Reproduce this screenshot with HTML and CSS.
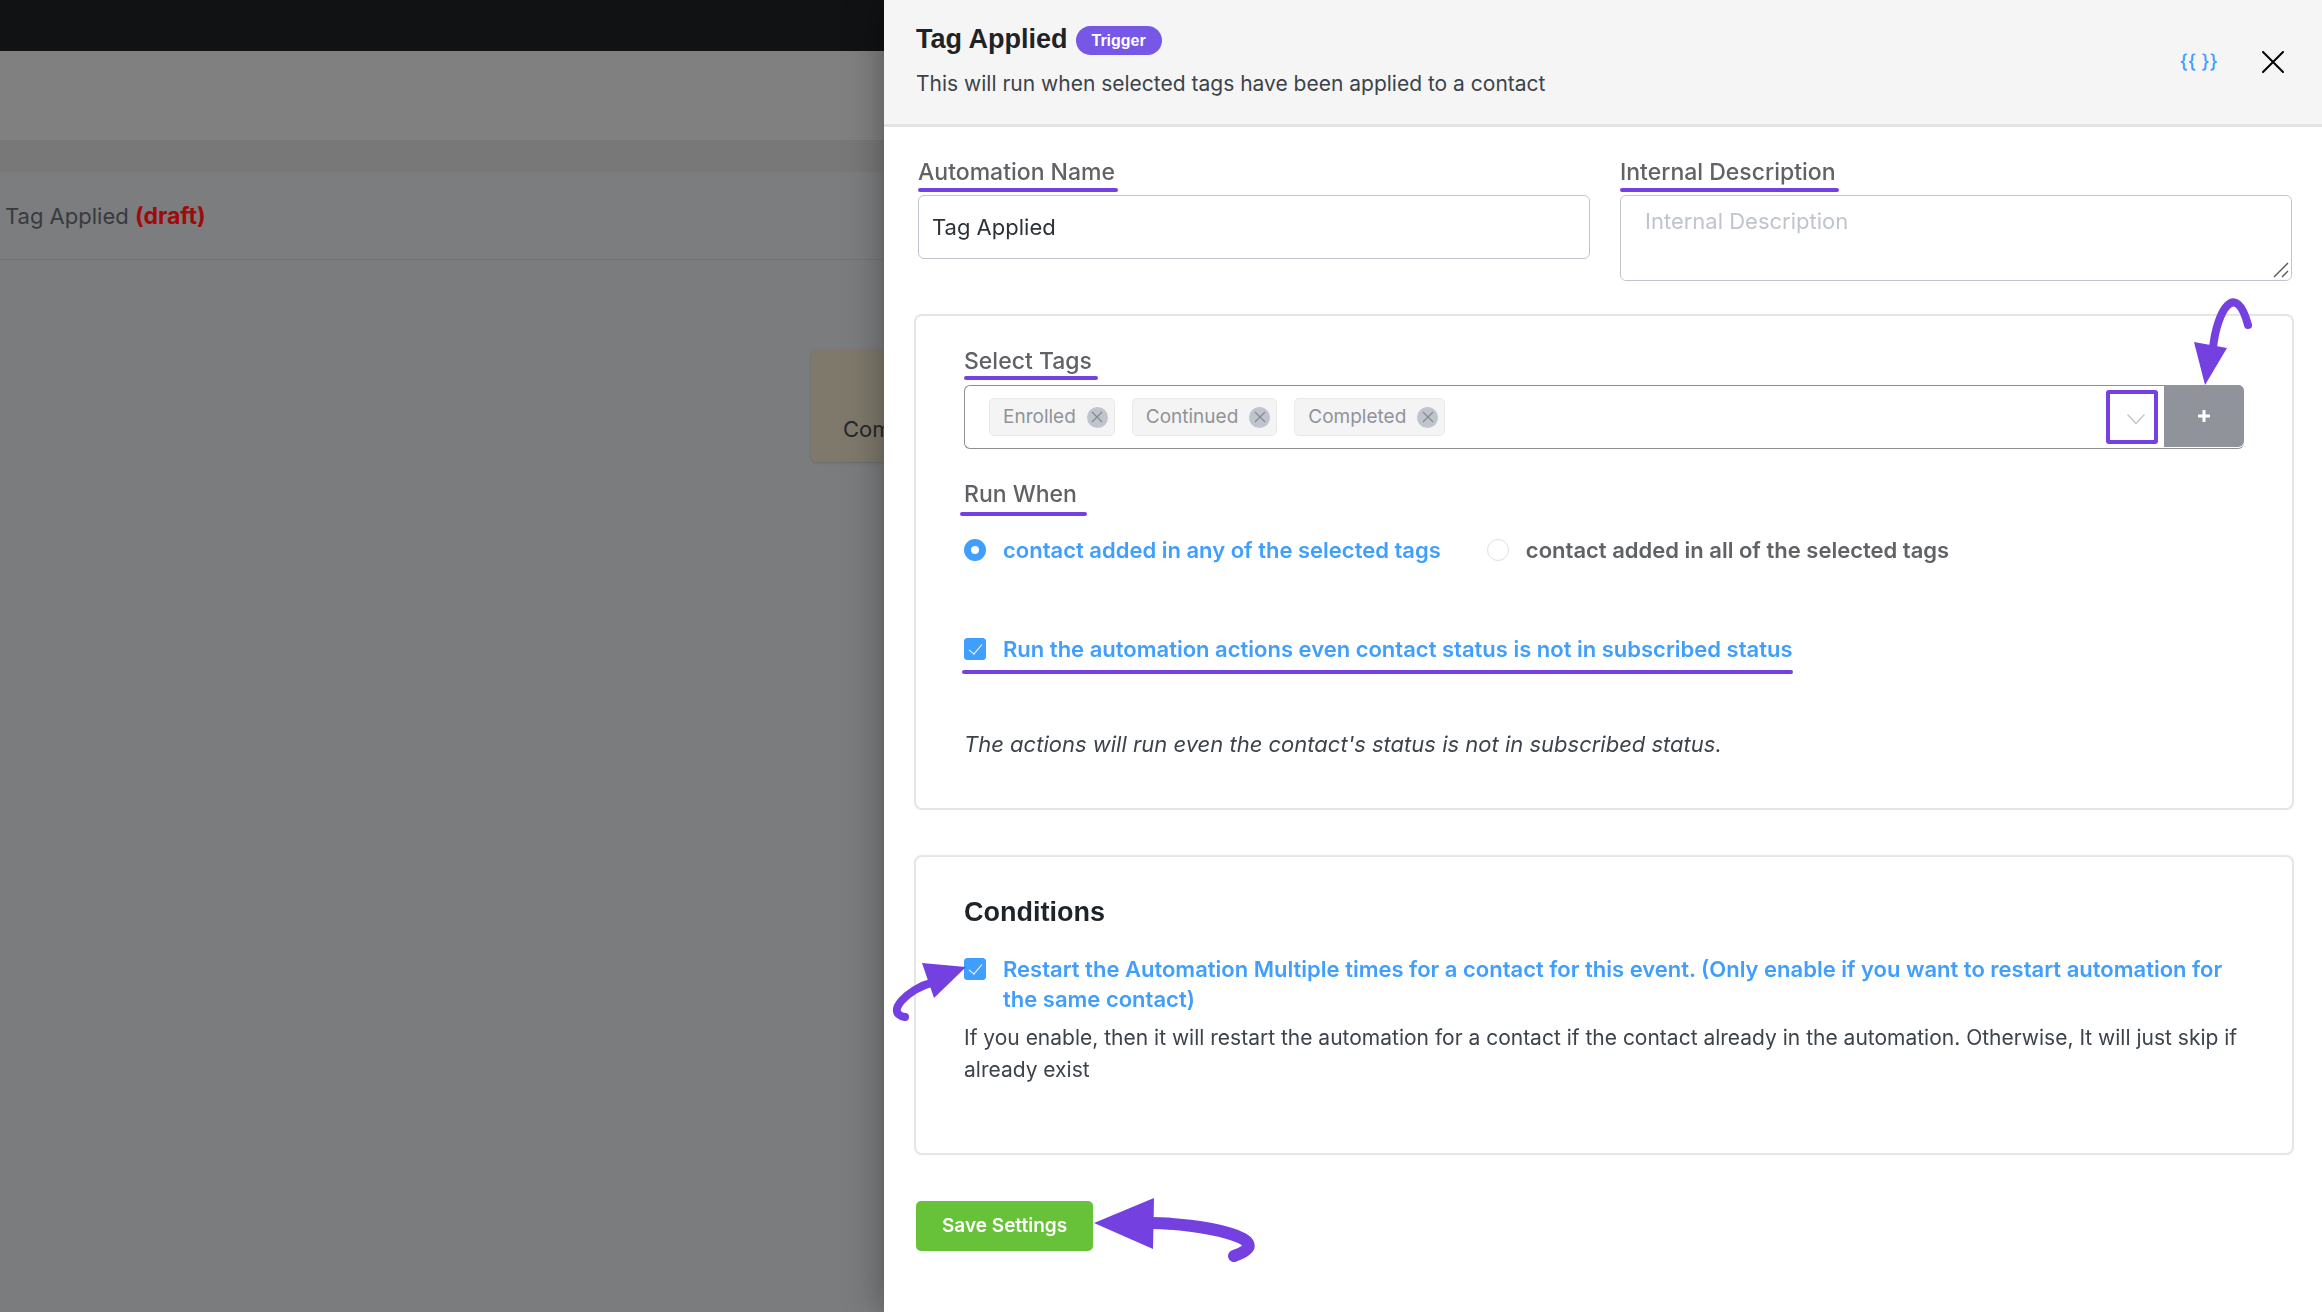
FILE: index.html
```html
<!DOCTYPE html>
<html lang="en">
<head>
<meta charset="utf-8">
<title>Tag Applied</title>
<link rel="stylesheet" href="styles.css">
</head>
<body>
<div class="page">
  <div class="admin-bar"></div>
  <div class="top-nav"></div>
  <div class="divider-band"></div>
  <div class="funnel-head">
    <span>Tag Applied</span> <strong class="draft">(draft)</strong>
  </div>
  <div class="canvas">
    <div class="funnel-block">Completed</div>
  </div>
</div>

<aside class="drawer" role="dialog" aria-labelledby="drawer-title">
  <header class="drawer-head">
    <div class="head-text">
      <div class="title-row">
        <h1 class="title" id="drawer-title">Tag Applied</h1>
        <span class="badge">Trigger</span>
      </div>
      <p class="subtitle">This will run when selected tags have been applied to a contact</p>
    </div>
    <div class="head-actions">
      <button class="icon-btn codes" type="button">{{ }}</button>
      <button class="icon-btn" type="button" aria-label="Close">
        <svg width="22" height="22" viewBox="0 0 22 22" fill="none" stroke="#000" stroke-width="2" stroke-linecap="round"><path d="M1 1L21 21M21 1L1 21"/></svg>
      </button>
    </div>
  </header>

  <form class="drawer-body">
    <div class="fields">
      <div class="field">
        <label class="label marked field-label" for="name">Automation Name</label>
        <input class="text-input" id="name" type="text" value="Tag Applied">
      </div>
      <div class="field">
        <label class="label marked field-label" for="desc">Internal Description</label>
        <div class="area-wrap">
          <textarea class="text-area" id="desc" placeholder="Internal Description"></textarea>
          <svg class="grip" width="16" height="16" viewBox="0 0 16 16" fill="none" stroke="#555" stroke-width="1.4"><path d="M1 15L15 1M9 15L15 9"/></svg>
        </div>
      </div>
    </div>

    <section class="card tags-card">
      <label class="label marked tags-label" for="tags">Select Tags</label>
      <div class="tag-row">
        <div class="tag-select">
          <span class="chip">Enrolled<button class="chip-x" type="button" aria-label="Remove Enrolled"><svg width="12" height="12" viewBox="0 0 12 12" stroke="#85888f" stroke-width="1.2"><path d="M1 1L11 11M11 1L1 11"/></svg></button></span>
          <span class="chip">Continued<button class="chip-x" type="button" aria-label="Remove Continued"><svg width="12" height="12" viewBox="0 0 12 12" stroke="#85888f" stroke-width="1.2"><path d="M1 1L11 11M11 1L1 11"/></svg></button></span>
          <span class="chip">Completed<button class="chip-x" type="button" aria-label="Remove Completed"><svg width="12" height="12" viewBox="0 0 12 12" stroke="#85888f" stroke-width="1.2"><path d="M1 1L11 11M11 1L1 11"/></svg></button></span>
          <input class="tag-input" id="tags" type="text">
          <button class="toggle" type="button" aria-label="Show tags">
            <svg width="18" height="12" viewBox="0 0 18 12" fill="none" stroke="#c3c6cc" stroke-width="1.5" stroke-linecap="round"><path d="M1 1L9 9.500L17 1"/></svg>
          </button>
        </div>
        <button class="add-btn" type="button" aria-label="Add tag">
          <svg width="14" height="14" viewBox="0 0 14 14" stroke="#fff" stroke-width="3"><path d="M7 1V13M1 7H13"/></svg>
        </button>
        <svg class="arrow arrow-add" width="64" height="90" viewBox="0 0 64 90">
          <path class="shaft" d="M23 50C27 12 46 -18 58 27"/>
          <path class="tip" d="M4 44L37 50L15 87Z"/>
        </svg>
      </div>

      <fieldset class="run-when">
        <legend class="label marked run-label">Run When</legend>
        <div class="radios">
          <label class="choice on"><input class="radio" type="radio" name="run" checked><span>contact added in any of the selected tags</span></label>
          <label class="choice"><input class="radio" type="radio" name="run"><span>contact added in all of the selected tags</span></label>
        </div>
      </fieldset>

      <label class="choice on marked status-choice"><input class="check" type="checkbox" checked><span>Run the automation actions even contact status is not in subscribed status</span></label>
      <p class="note">The actions will run even the contact's status is not in subscribed status.</p>
    </section>

    <section class="card conditions">
      <h2 class="title">Conditions</h2>
      <div class="restart">
        <label class="choice on"><input class="check" type="checkbox" checked><span>Restart the Automation Multiple times for a contact for this event. (Only enable if you want to restart automation for the same contact)</span></label>
        <svg class="arrow arrow-restart" width="80" height="68" viewBox="0 0 80 68">
          <path class="shaft" d="M41 29C20 34 -7 59 15 63"/>
          <path class="tip" d="M32 9L76 13L44 44Z"/>
        </svg>
      </div>
      <p class="help">If you enable, then it will restart the automation for a contact if the contact already in the automation. Otherwise, It will just skip if already exist</p>
    </section>

    <div class="save-row">
      <button class="save" type="submit">Save Settings</button>
      <svg class="arrow-save" width="166" height="68" viewBox="0 0 166 68">
        <path class="shaft thick" d="M58 27C104 27 190 43 141 60"/>
        <path class="tip" d="M1 27L61 2L60 53Z"/>
      </svg>
    </div>
  </form>
</aside>
</body>
</html>
```

FILE: styles.css
```css
* { box-sizing: border-box; }

body {
  margin: 0;
  font-family: Inter, "Liberation Sans", sans-serif;
  font-size: 22px;
  line-height: 30px;
  color: #3c434a;
}

h1, h2, p { margin: 0; }

button, input, textarea { font: inherit; }

button { border: 0; padding: 0; background: none; }

/* Dimmed page behind the drawer */
.page {
  display: flex;
  flex-direction: column;
  min-height: 100vh;
  overflow: hidden;
  background: #7b7c7e;
}
.admin-bar { height: 51px; background: #111214; }
.top-nav { height: 89px; background: #808080; }
.divider-band { height: 32px; background: #787878; }
.funnel-head {
  padding: 29px 5px 28px;
  border-bottom: 1px solid #727476;
  background: #7b7d7e;
  color: #383a3d;
}
.draft { color: #a00a0a; font-size: 23px; }
.canvas { padding: 90px 0 0 811px; }
.funnel-block {
  width: 420px;
  padding: 64px 32px 18px;
  border-radius: 6px;
  background: #7e796b;
  box-shadow: 0 1px 3px rgba(0, 0, 0, .15);
  color: #26282b;
}

/* Drawer */
.drawer {
  position: fixed;
  top: 0;
  right: 0;
  bottom: 0;
  width: 61.93%;
  background: #fff;
  box-shadow: 0 0 36px rgba(0, 0, 0, .36);
}
.drawer-head {
  display: flex;
  justify-content: space-between;
  align-items: center;
  padding: 19px 38px 24px 32px;
  border-bottom: 3px solid #e4e4e5;
  background: #f5f5f5;
}
.title-row { display: flex; align-items: center; gap: 8px; }
.title {
  font: 700 27px/40px "Liberation Sans", Arial, sans-serif;
  color: #1d2327;
}
.badge {
  margin-top: 2px;
  padding: 0 16px;
  border-radius: 15px;
  background: #7757e6;
  color: #fff;
  font: 700 16px/29px "Liberation Sans", Arial, sans-serif;
}
.subtitle { padding-top: 9px; font-size: 21px; line-height: 32px; }
.head-actions { display: flex; align-items: center; gap: 44px; padding-top: 4px; }
.icon-btn { display: flex; align-items: center; }
.codes { color: #409eff; font-size: 19px; font-weight: 500; }

.drawer-body { padding: 30px 28px 40px 30px; }
.fields {
  display: grid;
  grid-template-columns: 1fr 1fr;
  gap: 30px;
  padding: 0 2px 0 4px;
}
.field { display: flex; flex-direction: column; align-items: flex-start; gap: 8px; }
.label {
  width: fit-content;
  font-size: 23px;
  font-weight: 500;
  line-height: 30px;
  color: #606266;
}

/* Purple call-out marks */
.marked { position: relative; }
.marked::after {
  content: "";
  position: absolute;
  left: 0;
  right: 0;
  top: 31px;
  height: 4px;
  border-radius: 2px;
  background: #7440e0;
}
.field-label::after { right: -3px; }
.tags-label::after { right: -6px; top: 30px; }
.run-label::after { left: -4px; right: -10px; top: 33px; }
.status-choice::after { left: -2px; top: 36px; }
.arrow { position: absolute; }
.arrow-add { right: -10px; top: -88px; }
.arrow-restart { left: -74px; top: 0; }
.shaft { fill: none; stroke: #7440e0; stroke-width: 8px; stroke-linecap: round; }
.thick { stroke-width: 12px; }
.tip { fill: #7440e0; }

.text-input, .area-wrap {
  width: 100%;
  border: 1px solid #c0c4cc;
  border-radius: 6px;
  background: #fff;
}
.text-input { height: 64px; padding: 0 13px; color: #2c3338; }
.area-wrap { position: relative; display: flex; }
.text-area {
  flex: 1;
  height: 84px;
  padding: 10px 24px;
  border: 0;
  border-radius: 6px;
  resize: none;
  color: #2c3338;
}
.text-area::placeholder { color: #c0c4cc; }
.grip { position: absolute; right: 2px; bottom: 2px; }

.card {
  border: 2px solid #e6e6e8;
  border-radius: 8px;
  box-shadow: 0 0 2px rgba(0, 0, 0, .06);
}
.tags-card { margin-top: 33px; padding: 30px 48px 49px; }
.tags-label { display: block; }
.tag-row {
  position: relative;
  display: flex;
  margin-top: 9px;
  border: 1px solid #8c8f94;
  border-right: 0;
  border-radius: 6px;
}
.tag-select {
  flex: 1;
  display: flex;
  align-items: center;
  gap: 17px;
  height: 62px;
  padding: 0 6px 0 24px;
}
.chip {
  display: flex;
  align-items: center;
  gap: 11px;
  height: 38px;
  padding: 0 6px 0 13px;
  border: 1px solid #e9e9eb;
  border-radius: 5px;
  background: #f4f4f5;
  color: #909399;
  font-size: 19px;
}
.chip-x {
  display: flex;
  align-items: center;
  justify-content: center;
  width: 21px;
  height: 21px;
  border-radius: 50%;
  background: #c0c4cc;
}
.tag-input { flex: 1; min-width: 0; border: 0; outline: 0; }
.toggle {
  display: flex;
  align-items: center;
  justify-content: center;
  width: 52px;
  height: 54px;
  padding: 6px 0 0 8px;
  border: 4px solid #7440e0;
  border-radius: 3px;
}
.add-btn {
  display: flex;
  align-items: center;
  justify-content: center;
  width: 80px;
  margin: -1px 0 1px;
  border-radius: 0 6px 6px 0;
  background: #909399;
}

.run-when { margin: 30px 0 0; padding: 0; border: 0; }
.run-when legend { padding: 0; }
.radios { display: flex; gap: 46px; padding-top: 26px; }
.choice {
  display: flex;
  align-items: flex-start;
  gap: 17px;
  width: fit-content;
  font-size: 22px;
  font-weight: 600;
  color: #606266;
}
.on { color: #409eff; }
.radio, .check {
  appearance: none;
  flex: none;
  width: 22px;
  height: 22px;
  margin: 4px 0;
  border: 1px solid #dcdfe6;
  background: #fff;
}
.radio { border-radius: 50%; }
.radio:checked { border: 7px solid #409eff; }
.check { display: grid; place-items: center; border-radius: 3px; }
.check:checked { border-color: #409eff; background: #409eff; }
.check::after {
  content: "";
  width: 6px;
  height: 12px;
  margin-bottom: 3px;
  border: solid #fff;
  border-width: 0 1px 1px 0;
  transform: rotate(40deg);
}
.status-choice { margin-top: 69px; }
.note { margin-top: 65px; font-style: italic; }

.conditions { margin-top: 45px; padding: 35px 48px 67px; }
.restart { position: relative; margin-top: 22px; }
.help { margin-top: 8px; font-size: 21px; line-height: 32px; }

.save-row { display: flex; align-items: flex-start; margin: 46px 0 0 2px; }
.save {
  height: 50px;
  padding: 0 26px;
  border-radius: 5px;
  background: #67c23a;
  color: #fff;
  font-size: 19px;
  font-weight: 600;
}
.arrow-save { margin-top: -5px; }
```
